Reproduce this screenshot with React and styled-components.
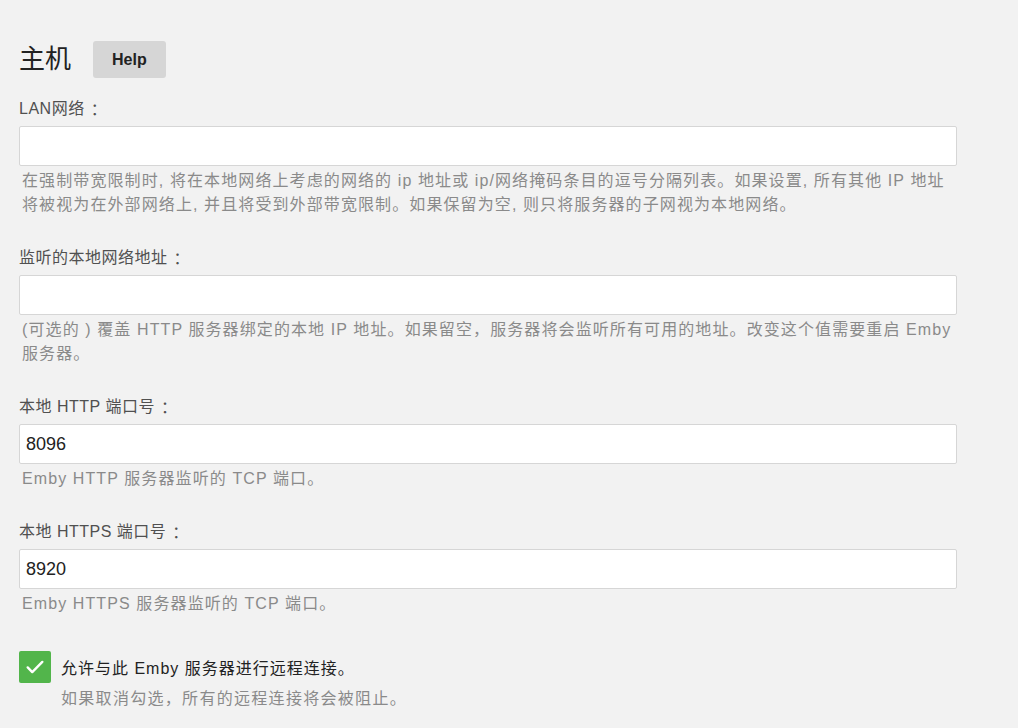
import React from "react";
import styled, { createGlobalStyle } from "styled-components";

const GlobalStyle = createGlobalStyle`
  html, body {
    margin: 0;
    padding: 0;
    background: #f2f2f2;
  }
  body {
    font-family: "Liberation Sans", Arial, "Noto Sans CJK SC", sans-serif;
    color: #333;
    text-spacing-trim: space-all;
  }
`;

const Page = styled.div`
  padding: 41px 61px 0 19px;
  width: 938px;
`;

const Header = styled.div`
  display: flex;
  align-items: center;
  gap: 22px;
  margin-bottom: 21px;
`;

const Title = styled.h1`
  margin: 0;
  font-size: 26px;
  font-weight: normal;
  color: #222;
  line-height: 37px;
`;

const HelpButton = styled.button`
  height: 37px;
  padding: 0 19px;
  border: none;
  border-radius: 3px;
  background: #d6d6d6;
  color: #222;
  font-family: "Liberation Sans", Arial, sans-serif;
  font-weight: bold;
  font-size: 16px;
  cursor: pointer;
`;

const Field = styled.div`
  margin-bottom: 31px;
`;

const Label = styled.label`
  display: flex;
  align-items: center;
  height: 20px;
  font-size: 16px;
  line-height: 20px;
  letter-spacing: 0.5px;
  color: #505050;
  margin-bottom: 7px;
  white-space: pre;
`;

const Colon = styled.span`
  font-family: "Noto Sans CJK TC", sans-serif;
  line-height: 1;
  margin-left: 2px;
`;

const Input = styled.input`
  display: block;
  box-sizing: border-box;
  width: 100%;
  height: 40px;
  padding: 0 6px;
  border: 1px solid #d6d6d6;
  border-radius: 2px;
  background: #fff;
  font-family: "Liberation Sans", Arial, sans-serif;
  font-size: 18px;
  color: #222;
  outline: none;
`;

const Description = styled.div`
  margin-top: 3px;
  padding-left: 3px;
  font-size: 16px;
  line-height: 24px;
  letter-spacing: 1.1px;
  color: #8a8a8a;
`;

const CheckRow = styled.div`
  display: flex;
  align-items: center;
  gap: 10px;
  margin-top: 35px;
`;

const CheckBox = styled.span`
  width: 32px;
  height: 32px;
  border-radius: 2px;
  background: ${(p) => (p.checked ? "#52b54b" : "#fff")};
  display: flex;
  align-items: center;
  justify-content: center;
  flex-shrink: 0;
`;

const CheckText = styled.span`
  font-size: 16px;
  letter-spacing: 1px;
  color: #222;
`;

const CheckNote = styled.div`
  margin-left: 42px;
  margin-top: 4px;
  font-size: 16px;
  line-height: 24px;
  letter-spacing: 1.3px;
  color: #8a8a8a;
`;

const fields = [
  {
    label: "LAN网络",
    value: "",
    help: (
      <>
        在强制带宽限制时, 将在本地网络上考虑的网络的 ip 地址或 ip/网络掩码条目的逗号分隔列表。如果设置, 所有其他 IP 地址
        <br />
        将被视为在外部网络上, 并且将受到外部带宽限制。如果保留为空, 则只将服务器的子网视为本地网络。
      </>
    ),
  },
  {
    label: "监听的本地网络地址",
    value: "",
    help: (
      <>
        (可选的 ) 覆盖 HTTP 服务器绑定的本地 IP 地址。如果留空，服务器将会监听所有可用的地址。改变这个值需要重启 Emby
        <br />
        服务器。
      </>
    ),
  },
  {
    label: "本地 HTTP 端口号",
    value: "8096",
    help: "Emby HTTP 服务器监听的 TCP 端口。",
  },
  {
    label: "本地 HTTPS 端口号",
    value: "8920",
    help: "Emby HTTPS 服务器监听的 TCP 端口。",
  },
];

export default function App() {
  return (
    <>
      <GlobalStyle />
      <Page>
        <Header>
          <Title>主机</Title>
          <HelpButton>Help</HelpButton>
        </Header>
        {fields.map((f) => (
          <Field key={f.label}>
            <Label>
              {f.label}
              <Colon>：</Colon>
            </Label>
            <Input defaultValue={f.value} />
            <Description>{f.help}</Description>
          </Field>
        ))}
        <CheckRow>
          <CheckBox checked>
            <svg width="22" height="22" viewBox="0 0 24 24" fill="none">
              <path
                d="M4 12.5l5 5L20 6.5"
                stroke="#fff"
                strokeWidth="2.6"
                strokeLinecap="round"
                strokeLinejoin="round"
              />
            </svg>
          </CheckBox>
          <CheckText>允许与此 Emby 服务器进行远程连接。</CheckText>
        </CheckRow>
        <CheckNote>如果取消勾选，所有的远程连接将会被阻止。</CheckNote>
      </Page>
    </>
  );
}
